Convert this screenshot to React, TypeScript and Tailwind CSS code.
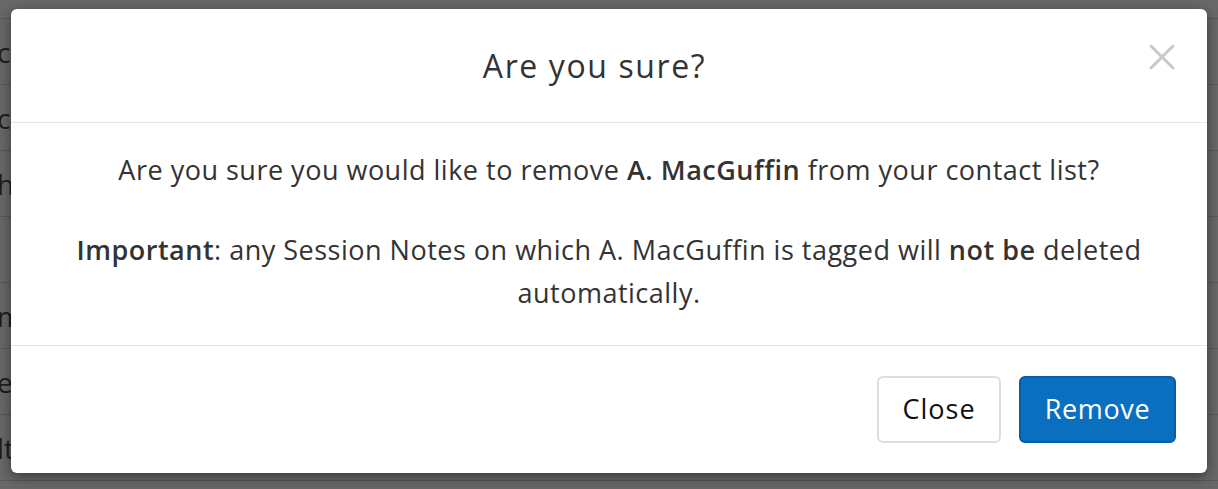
import React from 'react';
import { X } from 'lucide-react';

const rows = [
  { text: 'cC' },
  { text: 'c' },
  { text: 'h' },
  { text: '' },
  { text: 'm' },
  { text: 'e' },
  { text: 'lt' },
];

const App: React.FC = () => {
  return (
    <div className="relative h-[489px] w-[1218px] overflow-hidden bg-[#686868] font-['Open_Sans',sans-serif]">
      {/* page behind the backdrop */}
      <div className="flex flex-col">
        <div className="h-[19px] border-b border-[#595959]" />
        {rows.map((r, i) => (
          <div key={i} className="flex h-[66px] items-center border-b border-[#595959] text-[28px] text-[#1e1e1e]">
            <span className="-ml-[3px]">{r.text}</span>
          </div>
        ))}
      </div>

      {/* modal */}
      <div className="absolute inset-0 px-[11px] pt-[9px]">
        <div className="flex w-full flex-col rounded-[6px] bg-white text-[#333] shadow-[0_4px_14px_rgba(0,0,0,0.45)]">
          <div className="relative flex h-[114px] items-center justify-center border-b border-[#e5e5e5] pr-[29px]">
            <h4 className="text-[32px] leading-[40px] tracking-[1.6px]">Are you sure?</h4>
            <button className="absolute right-[23px] top-[26px] text-[#c8c8c8]">
              <X size={44} strokeWidth={1.6} />
            </button>
          </div>

          <div className="flex flex-col gap-[37px] px-[30px] pb-[31px] pt-[25px] text-center text-[27px] leading-[43px] tracking-[0.5px]">
            <p>
              Are you sure you would like to remove <b className="font-semibold">A. MacGuffin</b> from your contact list?
            </p>
            <p>
              <b className="font-semibold">Important</b>: any Session Notes on which A. MacGuffin is tagged will{' '}
              <b className="font-semibold">not be</b> deleted automatically.
            </p>
          </div>

          <div className="flex h-[128px] items-center justify-end gap-[18px] border-t border-[#e5e5e5] pr-[31px]">
            <button className="h-[67px] w-[124px] rounded-[6px] border-2 border-[#dedede] bg-white text-[27px] tracking-[1px] text-[#111]">
              Close
            </button>
            <button className="h-[67px] w-[157px] rounded-[6px] border-2 border-[#0a5ca3] bg-[#0b6fc0] text-[27px] tracking-[0.6px] text-white">
              Remove
            </button>
          </div>
        </div>
      </div>
    </div>
  );
};

export default App;
